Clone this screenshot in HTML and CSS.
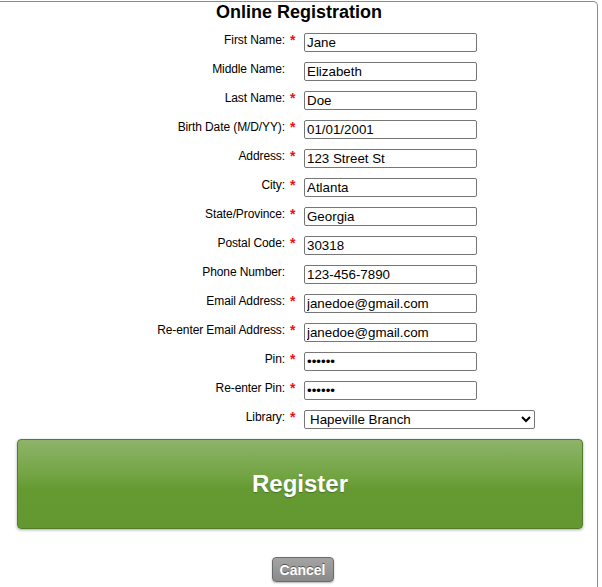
FILE: index.html
```html
<!DOCTYPE html>
<html>
<head>
<meta charset="utf-8">
<link rel="stylesheet" href="styles.css">
</head>
<body>
<div class="panel">
  <h1 class="title">Online Registration</h1>
  <form class="form">
    <div class="row"><label class="lbl">First Name:</label><span class="star">*</span><input class="field" type="text" value="Jane"></div>
    <div class="row"><label class="lbl">Middle Name:</label><span class="star"></span><input class="field" type="text" value="Elizabeth"></div>
    <div class="row"><label class="lbl">Last Name:</label><span class="star">*</span><input class="field" type="text" value="Doe"></div>
    <div class="row"><label class="lbl">Birth Date (M/D/YY):</label><span class="star">*</span><input class="field" type="text" value="01/01/2001"></div>
    <div class="row"><label class="lbl">Address:</label><span class="star">*</span><input class="field" type="text" value="123 Street St"></div>
    <div class="row"><label class="lbl">City:</label><span class="star">*</span><input class="field" type="text" value="Atlanta"></div>
    <div class="row"><label class="lbl">State/Province:</label><span class="star">*</span><input class="field" type="text" value="Georgia"></div>
    <div class="row"><label class="lbl">Postal Code:</label><span class="star">*</span><input class="field" type="text" value="30318"></div>
    <div class="row"><label class="lbl">Phone Number:</label><span class="star"></span><input class="field" type="text" value="123-456-7890"></div>
    <div class="row"><label class="lbl">Email Address:</label><span class="star">*</span><input class="field" type="text" value="janedoe@gmail.com"></div>
    <div class="row"><label class="lbl">Re-enter Email Address:</label><span class="star">*</span><input class="field" type="text" value="janedoe@gmail.com"></div>
    <div class="row"><label class="lbl">Pin:</label><span class="star">*</span><input class="field" type="password" value="123456"></div>
    <div class="row"><label class="lbl">Re-enter Pin:</label><span class="star">*</span><input class="field" type="password" value="123456"></div>
    <div class="row"><label class="lbl">Library:</label><span class="star">*</span><select class="pick"><option>Hapeville Branch</option></select></div>
    <button type="button" class="register">Register</button>
    <div class="cancel-wrap"><button type="button" class="cancel">Cancel</button></div>
  </form>
</div>
</body>
</html>
```
FILE: styles.css
```css
html, body {
  margin: 0;
  padding: 0;
  background: #ffffff;
  overflow: hidden;
}
body {
  font-family: "Liberation Sans", Arial, sans-serif;
  color: #000;
}
.panel {
  margin: 1px 0 0 -4px;
  width: 602px;
  height: 586px;
  box-sizing: border-box;
  border: 1px solid #8a8a8a;
  border-bottom: 0;
  border-radius: 5px 5px 0 0;
}
.title {
  margin: 0;
  padding-top: 0;
  font-size: 18px;
  font-weight: bold;
  line-height: 20px;
  text-align: center;
  padding-left: 4px;
}
.form {
  display: flex;
  flex-direction: column;
  margin-top: 11px;
}
.row {
  display: grid;
  grid-template-columns: 288px 19px auto;
  align-items: start;
  height: 29px;
}
.lbl {
  font-size: 12px;
  line-height: 14px;
  text-align: right;
  white-space: nowrap;
  letter-spacing: -0.1px;
}
.star {
  color: #ee1111;
  font-size: 14px;
  line-height: 14px;
  padding-left: 5px;
  font-weight: bold;
}
.field {
  width: 173px;
  height: 19px;
  box-sizing: border-box;
  border: 1px solid #767676;
  border-radius: 2px;
  padding: 1px 2px;
  font-family: "Liberation Sans", Arial, sans-serif;
  font-size: 13.33px;
  color: #000;
  margin: 0;
}
.pick {
  width: 231px;
  height: 19px;
  box-sizing: border-box;
  border: 1px solid #767676;
  border-radius: 2px;
  padding: 0 1px;
  font-family: "Liberation Sans", Arial, sans-serif;
  font-size: 13.33px;
  color: #000;
  background: #fff;
  margin: 0;
}
.register {
  align-self: flex-start;
  margin: 0 0 0 20px;
  width: 566px;
  height: 90px;
  border: 1px solid #517d2a;
  border-radius: 4px;
  background: linear-gradient(to bottom, #8db46a 0%, #73a443 40%, #659a32 55%, #639830 100%);
  box-shadow: 0 1px 3px rgba(0,0,0,0.35);
  color: #fff;
  font-family: "Liberation Sans", Arial, sans-serif;
  font-size: 24px;
  font-weight: bold;
  text-shadow: 0 1px 1px rgba(0,0,0,0.25);
  cursor: pointer;
}
.cancel-wrap {
  display: flex;
  justify-content: center;
  margin-top: 28px;
  padding-left: 11px;
}
.cancel {
  width: 62px;
  height: 25px;
  border: 1px solid #6a6a6a;
  border-radius: 4px;
  background: linear-gradient(to bottom, #a4a4a4 0%, #8a8a8a 100%);
  box-shadow: 0 1px 2px rgba(0,0,0,0.3);
  color: #fff;
  font-family: "Liberation Sans", Arial, sans-serif;
  font-size: 14px;
  font-weight: bold;
  text-shadow: 0 -1px 0 #555;
  padding: 0;
}
```
